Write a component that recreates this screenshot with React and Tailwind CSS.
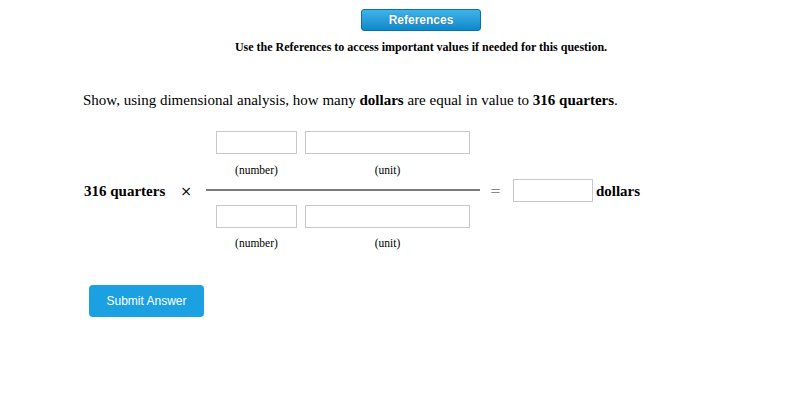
export default function App() {
  const serif = { fontFamily: '"Liberation Serif", "Times New Roman", serif' };
  const box = 'border border-[#c8c8c8] bg-white h-[23px]';

  return (
    <div className="w-[788px] h-[394px] bg-white text-black" style={serif}>
      <div className="flex flex-col items-center pl-[54px] pt-[9px]">
        <button
          className="w-[120px] h-[22px] rounded-[3px] border border-[#0b6fa8] bg-gradient-to-b from-[#3db3ea] to-[#0c88c9] text-white text-[12px] font-bold leading-none"
          style={{ fontFamily: '"Liberation Sans", Arial, sans-serif', textShadow: '0 0 1px rgba(0,0,0,0.4)' }}
        >
          References
        </button>
        <p className="mt-[9px] text-[12px] font-bold leading-[14px]">
          Use the References to access important values if needed for this question.
        </p>
      </div>

      <p className="ml-[83px] mt-[37px] text-[15px] leading-[18px]">
        Show, using dimensional analysis, how many <b>dollars</b> are equal in value to <b>316 quarters</b>.
      </p>

      <div className="flex items-center ml-[84px] mt-[22px]">
        <span className="text-[15px] font-bold leading-[16px]">316 quarters</span>
        <span className="ml-[15px] text-[14px] leading-[16px]" style={{ fontFamily: '"DejaVu Sans", sans-serif' }}>×</span>
        <div className="ml-[14px] w-[274px] flex flex-col">
          <div className="flex gap-[8px] pl-[10px]">
            <div className={`${box} w-[81px]`} />
            <div className={`${box} w-[165px]`} />
          </div>
          <div className="flex gap-[8px] pl-[10px] mt-[9px] text-[11.5px] leading-[14px]">
            <span className="w-[81px] text-center">(number)</span>
            <span className="w-[165px] text-center">(unit)</span>
          </div>
          <div className="mt-[12px] h-[2px] bg-[#7a7a7a]" />
          <div className="flex gap-[8px] pl-[10px] mt-[14px]">
            <div className={`${box} w-[81px]`} />
            <div className={`${box} w-[165px]`} />
          </div>
          <div className="flex gap-[8px] pl-[10px] mt-[8px] text-[11.5px] leading-[14px]">
            <span className="w-[81px] text-center">(number)</span>
            <span className="w-[165px] text-center">(unit)</span>
          </div>
        </div>
        <span className="ml-[10px] text-[13px] text-[#888]" style={{ fontFamily: '"DejaVu Sans", sans-serif' }}>=</span>
        <div className={`${box} ml-[12px] w-[80px]`} />
        <span className="ml-[3px] text-[15px] font-bold leading-[16px]">dollars</span>
      </div>

      <button
        className="ml-[89px] mt-[35px] w-[115px] h-[32px] rounded-[4px] bg-[#1ba1e2] text-white text-[12px] leading-none"
        style={{ fontFamily: '"Liberation Sans", Arial, sans-serif' }}
      >
        Submit Answer
      </button>
    </div>
  );
}
